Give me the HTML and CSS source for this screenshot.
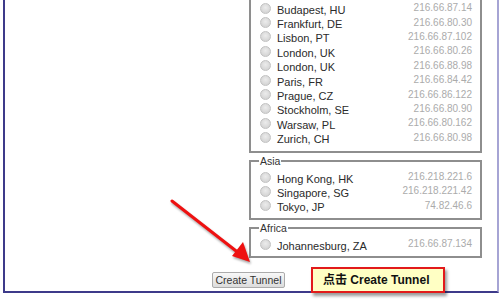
FILE: index.html
```html
<!DOCTYPE html>
<html>
<head>
<meta charset="utf-8">
<title>Create Tunnel</title>
<link rel="stylesheet" href="styles.css">
</head>
<body>
<div class="frame">
  <form class="tunnel">
    <div class="sites">
      <fieldset class="region cut">
        <label class="site"><input type="radio" name="server"><span class="city">Budapest, HU</span><span class="ip">216.66.87.14</span></label>
        <label class="site"><input type="radio" name="server"><span class="city">Frankfurt, DE</span><span class="ip">216.66.80.30</span></label>
        <label class="site"><input type="radio" name="server"><span class="city">Lisbon, PT</span><span class="ip">216.66.87.102</span></label>
        <label class="site"><input type="radio" name="server"><span class="city">London, UK</span><span class="ip">216.66.80.26</span></label>
        <label class="site"><input type="radio" name="server"><span class="city">London, UK</span><span class="ip">216.66.88.98</span></label>
        <label class="site"><input type="radio" name="server"><span class="city">Paris, FR</span><span class="ip">216.66.84.42</span></label>
        <label class="site"><input type="radio" name="server"><span class="city">Prague, CZ</span><span class="ip">216.66.86.122</span></label>
        <label class="site"><input type="radio" name="server"><span class="city">Stockholm, SE</span><span class="ip">216.66.80.90</span></label>
        <label class="site"><input type="radio" name="server"><span class="city">Warsaw, PL</span><span class="ip">216.66.80.162</span></label>
        <label class="site"><input type="radio" name="server"><span class="city">Zurich, CH</span><span class="ip">216.66.80.98</span></label>
      </fieldset>

      <fieldset class="region">
        <legend>Asia</legend>
        <label class="site"><input type="radio" name="server"><span class="city">Hong Kong, HK</span><span class="ip">216.218.221.6</span></label>
        <label class="site"><input type="radio" name="server"><span class="city">Singapore, SG</span><span class="ip">216.218.221.42</span></label>
        <label class="site"><input type="radio" name="server"><span class="city">Tokyo, JP</span><span class="ip">74.82.46.6</span></label>
      </fieldset>

      <fieldset class="region">
        <legend>Africa</legend>
        <label class="site"><input type="radio" name="server"><span class="city">Johannesburg, ZA</span><span class="ip">216.66.87.134</span></label>
      </fieldset>
    </div>

    <div class="actions">
      <button type="button" class="btn">Create Tunnel</button>
    </div>
  </form>
</div>

<!-- annotation -->
<svg class="arrow" width="500" height="304" viewBox="0 0 500 304">
  <line x1="172" y1="201" x2="240" y2="254" stroke="#ee1111" stroke-width="3" stroke-linecap="round"/>
  <polygon points="250,262 232,256 243,242" fill="#ee1111"/>
</svg>
<div class="callout">点击 Create Tunnel</div>
</body>
</html>
```

FILE: styles.css
```css
body {
   margin: 0;
   background-color: white;
   font-family: "Liberation Sans", Arial, sans-serif;
   color: #333;
}

.frame {
   margin: 0 1px 0 3px;
   height: 293px;
   box-sizing: border-box;
   border-left: 2px solid #3d3a8a;
   border-bottom: 2px solid #3d3a8a;
   border-right: 2px solid #a6a4d4;
}

.sites {
   display: flex;
   flex-direction: column;
   align-items: flex-end;
   padding-right: 15px;
}

.region {
   box-sizing: border-box;
   width: 233px;
   margin: 0 0 2px 0;
   padding: 3px 8px 5px 9px;
   border: 2px solid #8e8e8e;
}

.region.cut {
   border-top: none;
   padding-top: 1px;
   padding-bottom: 6px;
}

.region legend {
   font-size: 10.5px;
   color: #333;
   padding: 0 1px;
   margin-left: -1px;
   line-height: 12px;
}

.site {
   display: flex;
   align-items: center;
   height: 14.4px;
}

.site input {
   -webkit-appearance: none;
   appearance: none;
   width: 11px;
   height: 11px;
   margin: 0 6px 0 0;
   border: 1px solid #c2c2c2;
   border-radius: 50%;
   background: radial-gradient(circle at 50% 40%, #ececec 0%, #d6d6d6 70%, #cacaca 100%);
   box-sizing: border-box;
}

.city {
   font-size: 11px;
   color: #2a2a2a;
   padding-top: 3px;
}

.ip {
   margin-left: auto;
   font-size: 10px;
   color: #ababab;
   padding-bottom: 1px;
}

.actions {
   text-align: center;
   padding: 10px 0 0 0;
}

.btn {
   font-family: "Liberation Sans", Arial, sans-serif;
   font-size: 10.5px;
   color: #333;
   width: 73px;
   height: 16px;
   padding: 0;
   margin-left: -5px;
   border: 1px solid #ababab;
   border-radius: 2px;
   background: linear-gradient(#f8f8f8, #dcdcdc);
}

.arrow {
   position: absolute;
   left: 0;
   top: 0;
   filter: drop-shadow(1px 2px 1px rgba(0, 0, 0, 0.35));
}

.callout {
   position: absolute;
   left: 311px;
   top: 267px;
   width: 134px;
   height: 26px;
   box-sizing: border-box;
   padding-left: 10px;
   line-height: 23px;
   font-size: 12px;
   font-weight: bold;
   font-family: "Liberation Sans", Arial, "Noto Sans CJK SC", sans-serif;
   color: #111;
   background: #ffffc4;
   border: 2px solid #e21a1a;
   box-shadow: 2px 3px 3px rgba(0, 0, 0, 0.4);
}
```
